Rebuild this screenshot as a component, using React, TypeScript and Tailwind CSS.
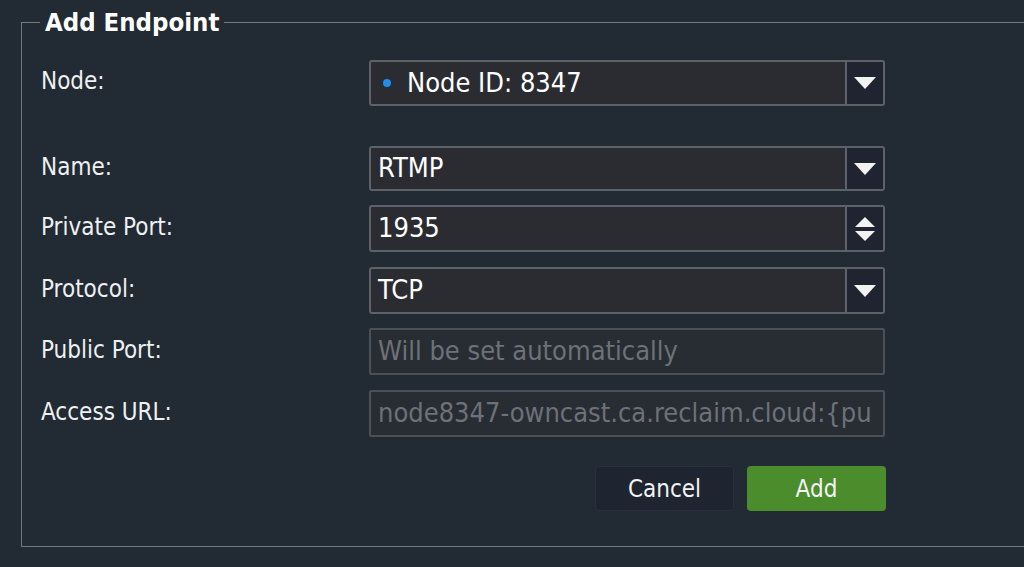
import React from 'react';

function Caret() {
  return (
    <svg width="22" height="12" viewBox="0 0 22 12">
      <path d="M0 0 L22 0 L11 12 Z" fill="#f2f2f2" />
    </svg>
  );
}

function Spinner() {
  return (
    <svg width="20" height="24" viewBox="0 0 20 24">
      <path d="M10 0 L20 10 L0 10 Z" fill="#f2f2f2" />
      <path d="M0 14 L20 14 L10 24 Z" fill="#f2f2f2" />
    </svg>
  );
}

interface FieldProps {
  label: string;
  mt: string;
  h: string;
  children: React.ReactNode;
}

function Field({ label, mt, h, children }: FieldProps) {
  return (
    <div className={`flex items-center ${mt} ${h}`}>
      <div className="w-[329px] pl-px pb-[4px] text-[24px] text-[#eef0f2]">{label}</div>
      <div className="w-[516px] h-full">{children}</div>
    </div>
  );
}

function SelectBox({ children, spinner = false }: { children: React.ReactNode; spinner?: boolean }) {
  return (
    <div className="flex h-full border-2 border-[#5d626a] rounded-[3px] bg-[#2b2c32]">
      <div className="flex-1 flex items-center pl-[7px] text-[27px] text-white">{children}</div>
      <div className="w-[38px] flex items-center justify-center border-l-2 border-[#5d626a] bg-[#1f2430]">
        {spinner ? <Spinner /> : <Caret />}
      </div>
    </div>
  );
}

function ReadOnlyBox({ text }: { text: string }) {
  return (
    <div className="flex items-center h-full border-2 border-[#4b5058] rounded-[2px] bg-[#282c33] pl-[7px] overflow-hidden whitespace-nowrap text-[27px] text-[#6d7179]">
      {text}
    </div>
  );
}

export default function App() {
  return (
    <div className="min-h-[567px] overflow-hidden bg-[#222a33] pt-2 font-['DejaVu_Sans_Condensed','DejaVu_Sans',sans-serif]">
      <fieldset className="ml-[21px] w-[1040px] h-[539px] border border-[#737880] pl-[18px]">
        <legend className="px-[5px] text-[25.5px] leading-[28px] font-bold text-white">Add Endpoint</legend>

        <Field label="Node:" mt="mt-[24px]" h="h-[46px]">
          <SelectBox>
            <span className="w-[8px] h-[8px] rounded-full bg-[#1e8ef0] ml-[5px] mr-[16px]" />
            Node ID: 8347
          </SelectBox>
        </Field>

        <Field label="Name:" mt="mt-[40px]" h="h-[45px]">
          <SelectBox>RTMP</SelectBox>
        </Field>

        <Field label="Private Port:" mt="mt-[14px]" h="h-[47px]">
          <SelectBox spinner>1935</SelectBox>
        </Field>

        <Field label="Protocol:" mt="mt-[15px]" h="h-[47px]">
          <SelectBox>TCP</SelectBox>
        </Field>

        <Field label="Public Port:" mt="mt-[14px]" h="h-[47px]">
          <ReadOnlyBox text="Will be set automatically" />
        </Field>

        <Field label="Access URL:" mt="mt-[15px]" h="h-[47px]">
          <ReadOnlyBox text="node8347-owncast.ca.reclaim.cloud:{pu" />
        </Field>

        <div className="flex w-[846px] justify-end gap-[13px] mt-[29px]">
          <button className="w-[139px] h-[45px] rounded-[4px] bg-[#1e2430] border border-[#2a313c] text-[24px] text-[#f2f2f2]">
            Cancel
          </button>
          <button className="w-[139px] h-[45px] rounded-[4px] bg-[#4b8c2d] text-[24px] text-[#f4f4f4]">
            Add
          </button>
        </div>
      </fieldset>
    </div>
  );
}
